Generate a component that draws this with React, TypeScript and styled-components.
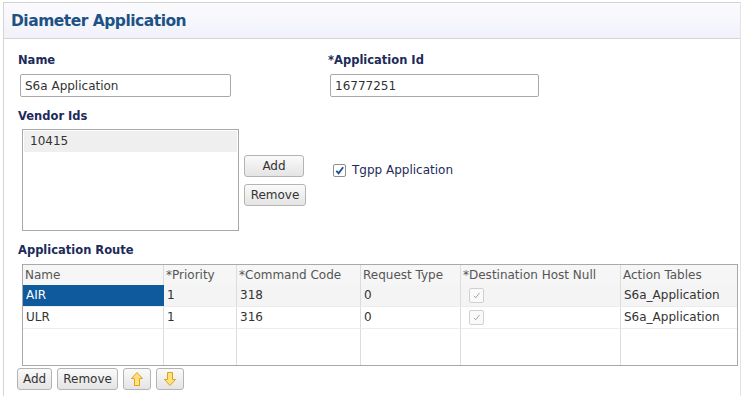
import React from "react";
import styled, { createGlobalStyle } from "styled-components";

const Global = createGlobalStyle`
  html, body { margin: 0; padding: 0; background: #fff; }
  body { font-family: "DejaVu Sans", Verdana, sans-serif; }
  * { box-sizing: border-box; }
`;

const Panel = styled.div`
  margin: 2px 0 0 3px;
  width: 738px;
  height: 394px;
  border: 1px solid #d4d4d4;
  border-bottom: none;
  border-right: 1px solid #e4e4e4;
`;

const Header = styled.div`
  height: 36px;
  padding: 0 0 0 7px;
  display: flex;
  align-items: center;
  background: linear-gradient(to bottom, #fbfbfe, #f1f1fa);
  border-bottom: 1px solid #d4d4d4;
`;

const Title = styled.h1`
  margin: 0;
  font-size: 15.5px;
  font-weight: bold;
  color: #1d5284;
  letter-spacing: -0.5px;
`;

const Body = styled.div`
  padding: 13px 0 0 14px;
  display: flex;
  flex-direction: column;
`;

const Row = styled.div`
  display: flex;
`;

const Field = styled.div<{ $w: number }>`
  width: ${(p) => p.$w}px;
  display: flex;
  flex-direction: column;
`;

const Label = styled.div<{ $mt?: number }>`
  font-size: 11.5px;
  font-weight: bold;
  color: #1c2b5a;
  height: 16px;
  line-height: 16px;
  margin-top: ${(p) => p.$mt ?? 0}px;
`;

const Input = styled.div<{ $w: number }>`
  margin: 6px 0 0 2px;
  width: ${(p) => p.$w}px;
  height: 23px;
  border: 1px solid #a9a9a9;
  border-radius: 2px;
  font-size: 12px;
  color: #333;
  padding-left: 4px;
  line-height: 22px;
`;

const VendorRow = styled.div`
  display: flex;
  margin-top: 5px;
`;

const ListBox = styled.div`
  margin-left: 4px;
  width: 217px;
  height: 102px;
  border: 1px solid #a9a9a9;
  padding: 1px;
`;

const ListItem = styled.div`
  height: 21px;
  line-height: 20px;
  padding-left: 6px;
  background: #efefef;
  font-size: 12px;
  color: #333;
`;

const ButtonCol = styled.div`
  display: flex;
  flex-direction: column;
  gap: 7px;
  margin: 26px 0 0 5px;
`;

const Btn = styled.button<{ $w?: number }>`
  width: ${(p) => (p.$w ? `${p.$w}px` : "auto")};
  height: 22px;
  padding: 0 5px;
  border: 1px solid #b4b4b4;
  border-radius: 3px;
  background: linear-gradient(to bottom, #fafafa, #e4e4e4);
  font-family: "DejaVu Sans", Verdana, sans-serif;
  font-size: 12px;
  color: #333;
  display: flex;
  align-items: center;
  justify-content: center;
  cursor: pointer;
`;

const CheckWrap = styled.label`
  display: flex;
  align-items: center;
  gap: 6px;
  margin: 34px 0 0 27px;
  height: 14px;
  font-size: 12px;
  color: #1c2b5a;
`;

const CheckBox = styled.span`
  width: 13px;
  height: 13px;
  border: 1px solid #8f8f8f;
  border-radius: 2px;
  background: #fff;
  display: flex;
  align-items: center;
  justify-content: center;
`;

const Table = styled.div`
  margin: 6px 0 0 4px;
  width: 716px;
  height: 102px;
  border: 1px solid #a9a9a9;
  display: grid;
  grid-template-columns: 141px 73px 124px 100px 160px 1fr;
  grid-template-rows: 20px 22px 22px 1fr;
`;

const Th = styled.div<{ $last?: boolean }>`
  background: #f6f6f6;
  border-right: ${(p) => (p.$last ? "none" : "1px solid #dcdcdc")};
  font-size: 12px;
  color: #555;
  padding-left: 2px;
  line-height: 20px;
  white-space: nowrap;
  overflow: hidden;
`;

const Td = styled.div<{ $sel?: boolean; $alt?: boolean; $last?: boolean }>`
  background: ${(p) => (p.$sel ? "#0e5a9c" : p.$alt ? "#f4f4f4" : "#fff")};
  color: ${(p) => (p.$sel ? "#fff" : "#333")};
  border-right: ${(p) => (p.$last || p.$sel ? "none" : "1px solid #dcdcdc")};
  border-bottom: 1px solid #ececec;
  font-size: 12px;
  padding-left: 3px;
  line-height: 21px;
  white-space: nowrap;
  display: flex;
  align-items: center;
`;

const Filler = styled.div<{ $last?: boolean }>`
  border-right: ${(p) => (p.$last ? "none" : "1px solid #dcdcdc")};
`;

const MiniCheck = styled.span`
  width: 15px;
  height: 15px;
  margin-left: 5px;
  border: 1px solid #d0d0d0;
  border-radius: 2px;
  background: #fafafa;
  display: flex;
  align-items: center;
  justify-content: center;
`;

const Toolbar = styled.div`
  display: flex;
  gap: 5px;
  margin: 2px 0 0 -1px;
`;

const ArrowBtn = styled(Btn)`
  width: 28px;
  padding: 0;
`;

const Check = ({ color, w }: { color: string; w: number }) => (
  <svg width={w} height={w} viewBox="0 0 12 12">
    <path d="M2.5 6.5 L5 9 L10 2.5" fill="none" stroke={color} strokeWidth={w > 10 ? 2 : 1} />
  </svg>
);

const Arrow = ({ down }: { down?: boolean }) => (
  <svg width="14" height="16" viewBox="0 0 14 16" style={{ transform: down ? "rotate(180deg)" : undefined }}>
    <path
      d="M7 1.5 L12.5 7.5 L9.5 7.5 L9.5 14.5 L4.5 14.5 L4.5 7.5 L1.5 7.5 Z"
      fill="#ffe27a"
      stroke="#e0a020"
      strokeWidth="1"
      strokeLinejoin="round"
    />
  </svg>
);

const cols = ["Name", "*Priority", "*Command Code", "Request Type", "*Destination Host Null", "Action Tables"];
const rows = [
  { name: "AIR", pr: "1", cc: "318", rt: "0", at: "S6a_Application" },
  { name: "ULR", pr: "1", cc: "316", rt: "0", at: "S6a_Application" },
];

export default function App() {
  return (
    <>
      <Global />
      <Panel>
        <Header>
          <Title>Diameter Application</Title>
        </Header>
        <Body>
          <Row>
            <Field $w={310}>
              <Label>Name</Label>
              <Input $w={211}>S6a Application</Input>
            </Field>
            <Field $w={300}>
              <Label>*Application Id</Label>
              <Input $w={209}>16777251</Input>
            </Field>
          </Row>
          <Label $mt={11}>Vendor Ids</Label>
          <VendorRow>
            <ListBox>
              <ListItem>10415</ListItem>
            </ListBox>
            <ButtonCol>
              <Btn $w={60}>Add</Btn>
              <Btn $w={62}>Remove</Btn>
            </ButtonCol>
            <CheckWrap>
              <CheckBox>
                <Check color="#1a4f9c" w={11} />
              </CheckBox>
              Tgpp Application
            </CheckWrap>
          </VendorRow>
          <Label $mt={11}>Application Route</Label>
          <Table>
            {cols.map((c, i) => (
              <Th key={c} $last={i === cols.length - 1}>
                {c}
              </Th>
            ))}
            {rows.map((r, ri) => (
              <React.Fragment key={r.name}>
                <Td $sel={ri === 0}>{r.name}</Td>
                <Td $alt={ri === 0}>{r.pr}</Td>
                <Td $alt={ri === 0}>{r.cc}</Td>
                <Td $alt={ri === 0}>{r.rt}</Td>
                <Td $alt={ri === 0}>
                  <MiniCheck>
                    <Check color="#888" w={9} />
                  </MiniCheck>
                </Td>
                <Td $alt={ri === 0} $last>
                  {r.at}
                </Td>
              </React.Fragment>
            ))}
            {cols.map((c, i) => (
              <Filler key={c} $last={i === cols.length - 1} />
            ))}
          </Table>
          <Toolbar>
            <Btn>Add</Btn>
            <Btn>Remove</Btn>
            <ArrowBtn>
              <Arrow />
            </ArrowBtn>
            <ArrowBtn>
              <Arrow down />
            </ArrowBtn>
          </Toolbar>
        </Body>
      </Panel>
    </>
  );
}
